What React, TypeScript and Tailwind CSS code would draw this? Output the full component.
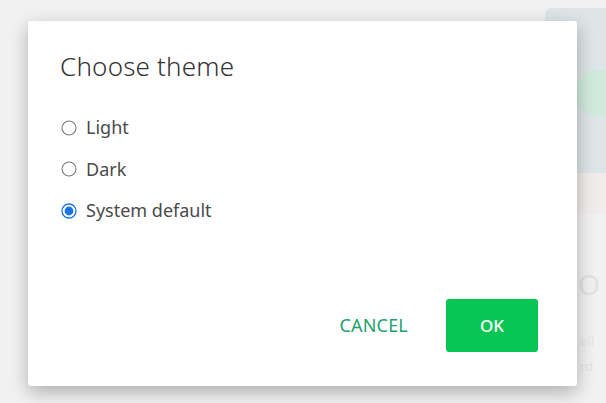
import React from "react";

function Radio({ checked }: { checked?: boolean }) {
  return (
    <svg width="16" height="16" viewBox="0 0 16 16" className="shrink-0">
      {checked ? (
        <>
          <circle cx="8" cy="8" r="7" fill="#fff" stroke="#1a73e8" strokeWidth="1.3" />
          <circle cx="8" cy="8" r="4.4" fill="#1a73e8" />
        </>
      ) : (
        <circle cx="8" cy="8" r="7" fill="#fff" stroke="#7a7a7a" strokeWidth="1.1" />
      )}
    </svg>
  );
}

export default function App() {
  const options = [
    { label: "Light", checked: false },
    { label: "Dark", checked: false },
    { label: "System default", checked: true },
  ];
  return (
    <div
      className="relative w-[606px] h-[403px] overflow-hidden bg-[#f1f1f1]"
      style={{ fontFamily: '"Noto Sans", "Open Sans", sans-serif' }}
    >
      {/* faded background content */}
      <div className="absolute left-[545px] top-[8px] w-[80px] h-[165px] rounded-[6px] bg-[#dde5e6] overflow-hidden">
        <div className="absolute left-[30px] top-[62px] w-[50px] h-[46px] rounded-full bg-[#cfeadb]" />
      </div>
      <div className="absolute left-[545px] top-[173px] w-[80px] h-[40px] bg-[#efeceb]" />
      <div className="absolute left-[578px] top-[270px] text-[28px] leading-none text-[#e2e2e2]">O</div>
      <div className="absolute left-[580px] top-[335px] text-[13px] leading-none text-[#e4e4e4]">ell</div>
      <div className="absolute left-[580px] top-[360px] text-[13px] leading-none text-[#e4e4e4]">rd</div>

      {/* dialog */}
      <div className="absolute left-[28px] top-[21px] w-[549px] h-[365px] bg-white rounded-[3px] shadow-[0_6px_18px_rgba(0,0,0,0.28)] flex flex-col">
        <div className="pl-[32px] pt-[28px] text-[26px] leading-[34px] font-light text-[#333] tracking-[0.2px]">Choose theme</div>
        <div className="flex flex-col pl-[33px] pt-[32px] gap-[16.5px]">
          {options.map((o) => (
            <div key={o.label} className="flex items-center gap-[9px] h-[25px]">
              <Radio checked={o.checked} />
              <span className="text-[18px] leading-[25px] text-[#4a4a4a]">{o.label}</span>
            </div>
          ))}
        </div>
        <div className="flex-1" />
        <div className="flex items-center justify-end pr-[39px] pb-[34px] gap-[38px]">
          <button className="text-[18px] text-[#23a270] tracking-[0.2px]">CANCEL</button>
          <button className="w-[92px] h-[53px] rounded-[3px] bg-[#08c653] text-white text-[17px] font-medium">OK</button>
        </div>
      </div>
    </div>
  );
}
